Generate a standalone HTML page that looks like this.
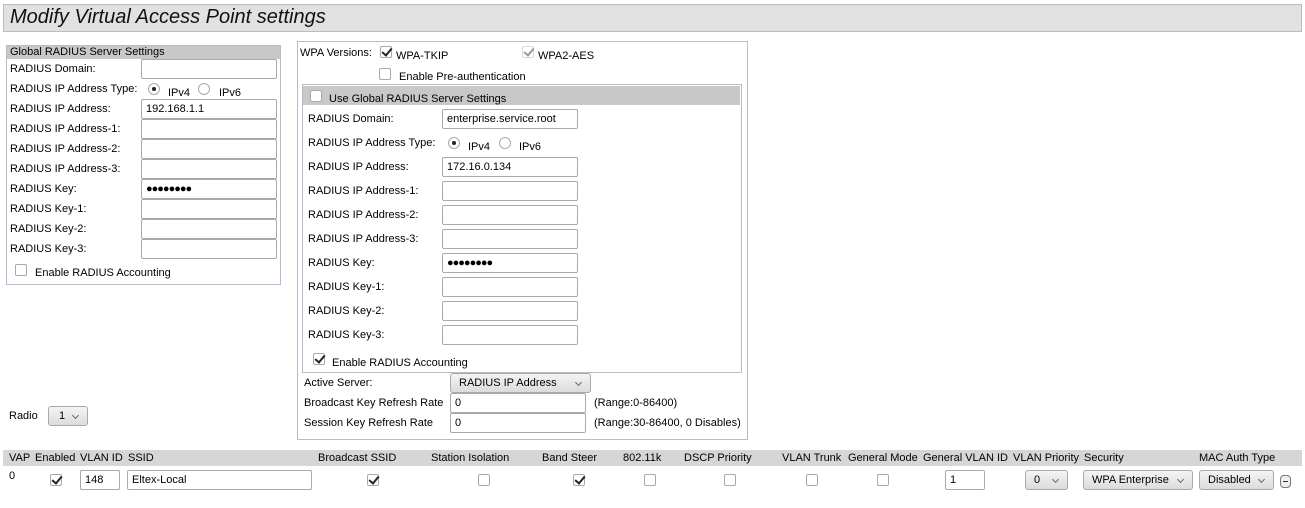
<!DOCTYPE html>
<html><head><meta charset="utf-8"><style>
*{box-sizing:border-box;margin:0;padding:0}
body{width:1305px;height:508px;background:#fff;font-family:"Liberation Sans",sans-serif;font-size:11px;color:#000;position:relative;overflow:hidden}
.a{position:absolute;white-space:nowrap}
.in{position:absolute;border:1px solid #a9a9a9;border-radius:2px;background:#fff;padding-left:4px;font-size:11px;line-height:19px}
.cb{position:absolute;width:12px;height:12px;border:1px solid #a9a9a9;border-radius:2px;background:#fff}
.ck::after{content:"";position:absolute;left:3px;top:-1px;width:4px;height:8px;border:solid #222;border-width:0 2px 2px 0;transform:rotate(40deg)}
.rd{position:absolute;width:12px;height:12px;border:1px solid #a9a9a9;border-radius:50%;background:#fff}
.rd.on::after{content:"";position:absolute;left:3px;top:3px;width:4px;height:4px;border-radius:50%;background:#222}
.sel{position:absolute;border:1px solid #a9a9a9;border-radius:3px;background:linear-gradient(#f4f4f4,#dcdcdc);padding-left:8px;font-size:11px;line-height:19px}
.sel::after{content:"";position:absolute;right:9px;top:6px;width:4px;height:4px;border:solid #666;border-width:0 1px 1px 0;transform:rotate(45deg)}
</style></head><body>
<div class="a" style="left:3px;top:4px;width:1299px;height:28px;background:#e1e1e1;border:1px solid #b8bcc6"></div>
<div class="a" style="left:10px;top:6px;font-size:20px;font-style:italic;color:#111">Modify Virtual Access Point settings</div>

<div class="a" style="left:6px;top:45px;width:275px;height:240px;border:1px solid #b8bcc6"></div>
<div class="a" style="left:7px;top:46px;width:273px;height:13px;background:#c8c8c8"></div>
<div class="a" style="left:10px;top:46px">Global RADIUS Server Settings</div>
<div class="a" style="left:10px;top:63px">RADIUS Domain:</div><div class="in" style="left:141px;top:59px;width:136px;height:20px"></div>
<div class="a" style="left:10px;top:83px">RADIUS IP Address Type:</div>
<div class="rd on" style="left:148px;top:83px"></div><div class="a" style="left:168px;top:87px">IPv4</div>
<div class="rd" style="left:198px;top:83px"></div><div class="a" style="left:219px;top:87px">IPv6</div>
<div class="a" style="left:10px;top:103px">RADIUS IP Address:</div><div class="in" style="left:141px;top:99px;width:136px;height:20px">192.168.1.1</div>
<div class="a" style="left:10px;top:123px">RADIUS IP Address-1:</div><div class="in" style="left:141px;top:119px;width:136px;height:20px"></div>
<div class="a" style="left:10px;top:143px">RADIUS IP Address-2:</div><div class="in" style="left:141px;top:139px;width:136px;height:20px"></div>
<div class="a" style="left:10px;top:163px">RADIUS IP Address-3:</div><div class="in" style="left:141px;top:159px;width:136px;height:20px"></div>
<div class="a" style="left:10px;top:183px">RADIUS Key:</div><div class="in" style="left:141px;top:179px;width:136px;height:20px;letter-spacing:-1px">●●●●●●●●</div>
<div class="a" style="left:10px;top:203px">RADIUS Key-1:</div><div class="in" style="left:141px;top:199px;width:136px;height:20px"></div>
<div class="a" style="left:10px;top:223px">RADIUS Key-2:</div><div class="in" style="left:141px;top:219px;width:136px;height:20px"></div>
<div class="a" style="left:10px;top:243px">RADIUS Key-3:</div><div class="in" style="left:141px;top:239px;width:136px;height:20px"></div>
<div class="cb" style="left:15px;top:264px"></div><div class="a" style="left:35px;top:267px">Enable RADIUS Accounting</div>

<div class="a" style="left:297px;top:41px;width:451px;height:399px;border:1px solid #b8bcc6"></div>
<div class="a" style="left:300px;top:47px">WPA Versions:</div>
<div class="cb ck" style="left:380px;top:46px"></div><div class="a" style="left:396px;top:50px">WPA-TKIP</div>
<div class="cb ck" style="left:522px;top:46px;opacity:.45"></div><div class="a" style="left:538px;top:50px">WPA2-AES</div>
<div class="cb" style="left:379px;top:68px"></div><div class="a" style="left:399px;top:71px">Enable Pre-authentication</div>
<div class="a" style="left:302px;top:84px;width:440px;height:289px;border:1px solid #b8bcc6"></div>
<div class="a" style="left:303px;top:86px;width:437px;height:19px;background:#c8c8c8"></div>
<div class="cb" style="left:310px;top:90px"></div><div class="a" style="left:329px;top:93px">Use Global RADIUS Server Settings</div>
<div class="a" style="left:308px;top:113px">RADIUS Domain:</div><div class="in" style="left:442px;top:109px;width:136px;height:20px">enterprise.service.root</div>
<div class="a" style="left:308px;top:137px">RADIUS IP Address Type:</div>
<div class="rd on" style="left:448px;top:137px"></div><div class="a" style="left:468px;top:141px">IPv4</div>
<div class="rd" style="left:499px;top:137px"></div><div class="a" style="left:519px;top:141px">IPv6</div>
<div class="a" style="left:308px;top:161px">RADIUS IP Address:</div><div class="in" style="left:442px;top:157px;width:136px;height:20px">172.16.0.134</div>
<div class="a" style="left:308px;top:185px">RADIUS IP Address-1:</div><div class="in" style="left:442px;top:181px;width:136px;height:20px"></div>
<div class="a" style="left:308px;top:209px">RADIUS IP Address-2:</div><div class="in" style="left:442px;top:205px;width:136px;height:20px"></div>
<div class="a" style="left:308px;top:233px">RADIUS IP Address-3:</div><div class="in" style="left:442px;top:229px;width:136px;height:20px"></div>
<div class="a" style="left:308px;top:257px">RADIUS Key:</div><div class="in" style="left:442px;top:253px;width:136px;height:20px;letter-spacing:-1px">●●●●●●●●</div>
<div class="a" style="left:308px;top:281px">RADIUS Key-1:</div><div class="in" style="left:442px;top:277px;width:136px;height:20px"></div>
<div class="a" style="left:308px;top:305px">RADIUS Key-2:</div><div class="in" style="left:442px;top:301px;width:136px;height:20px"></div>
<div class="a" style="left:308px;top:329px">RADIUS Key-3:</div><div class="in" style="left:442px;top:325px;width:136px;height:20px"></div>
<div class="cb ck" style="left:313px;top:353px"></div><div class="a" style="left:332px;top:357px">Enable RADIUS Accounting</div>
<div class="a" style="left:304px;top:377px">Active Server:</div><div class="sel" style="left:450px;top:373px;width:141px;height:20px">RADIUS IP Address</div>
<div class="a" style="left:304px;top:397px">Broadcast Key Refresh Rate</div><div class="in" style="left:450px;top:393px;width:136px;height:20px">0</div><div class="a" style="left:594px;top:397px">(Range:0-86400)</div>
<div class="a" style="left:304px;top:417px">Session Key Refresh Rate</div><div class="in" style="left:450px;top:413px;width:136px;height:20px">0</div><div class="a" style="left:594px;top:417px">(Range:30-86400, 0 Disables)</div>

<div class="a" style="left:9px;top:410px">Radio</div><div class="sel" style="left:48px;top:406px;width:40px;height:20px;padding-left:10px">1</div>

<div class="a" style="left:3px;top:450px;width:1299px;height:16px;background:#d6d6d6"></div>
<div class="a" style="left:9px;top:452px">VAP</div><div class="a" style="left:35px;top:452px">Enabled</div><div class="a" style="left:80px;top:452px">VLAN ID</div><div class="a" style="left:128px;top:452px">SSID</div>
<div class="a" style="left:318px;top:452px">Broadcast SSID</div><div class="a" style="left:431px;top:452px">Station Isolation</div><div class="a" style="left:542px;top:452px">Band Steer</div><div class="a" style="left:623px;top:452px">802.11k</div>
<div class="a" style="left:684px;top:452px">DSCP Priority</div><div class="a" style="left:782px;top:452px">VLAN Trunk</div><div class="a" style="left:848px;top:452px">General Mode</div><div class="a" style="left:923px;top:452px">General VLAN ID</div><div class="a" style="left:1013px;top:452px">VLAN Priority</div><div class="a" style="left:1084px;top:452px">Security</div><div class="a" style="left:1199px;top:452px">MAC Auth Type</div>
<div class="a" style="left:9px;top:470px">0</div>
<div class="cb ck" style="left:50px;top:474px"></div>
<div class="in" style="left:80px;top:470px;width:40px;height:20px">148</div>
<div class="in" style="left:127px;top:470px;width:185px;height:20px">Eltex-Local</div>
<div class="cb ck" style="left:367px;top:474px"></div>
<div class="cb" style="left:478px;top:474px"></div>
<div class="cb ck" style="left:573px;top:474px"></div>
<div class="cb" style="left:644px;top:474px"></div>
<div class="cb" style="left:724px;top:474px"></div>
<div class="cb" style="left:806px;top:474px"></div>
<div class="cb" style="left:877px;top:474px"></div>
<div class="in" style="left:945px;top:470px;width:40px;height:20px">1</div>
<div class="sel" style="left:1025px;top:470px;width:43px;height:20px">0</div>
<div class="sel" style="left:1083px;top:470px;width:110px;height:20px">WPA Enterprise</div>
<div class="sel" style="left:1199px;top:470px;width:75px;height:20px">Disabled</div>
<div class="a" style="left:1280px;top:475px;width:11px;height:13px;border:1px solid #777;border-radius:4px;background:#eee"></div>
<div class="a" style="left:1283px;top:481px;width:5px;height:1px;background:#333"></div>
</body></html>
